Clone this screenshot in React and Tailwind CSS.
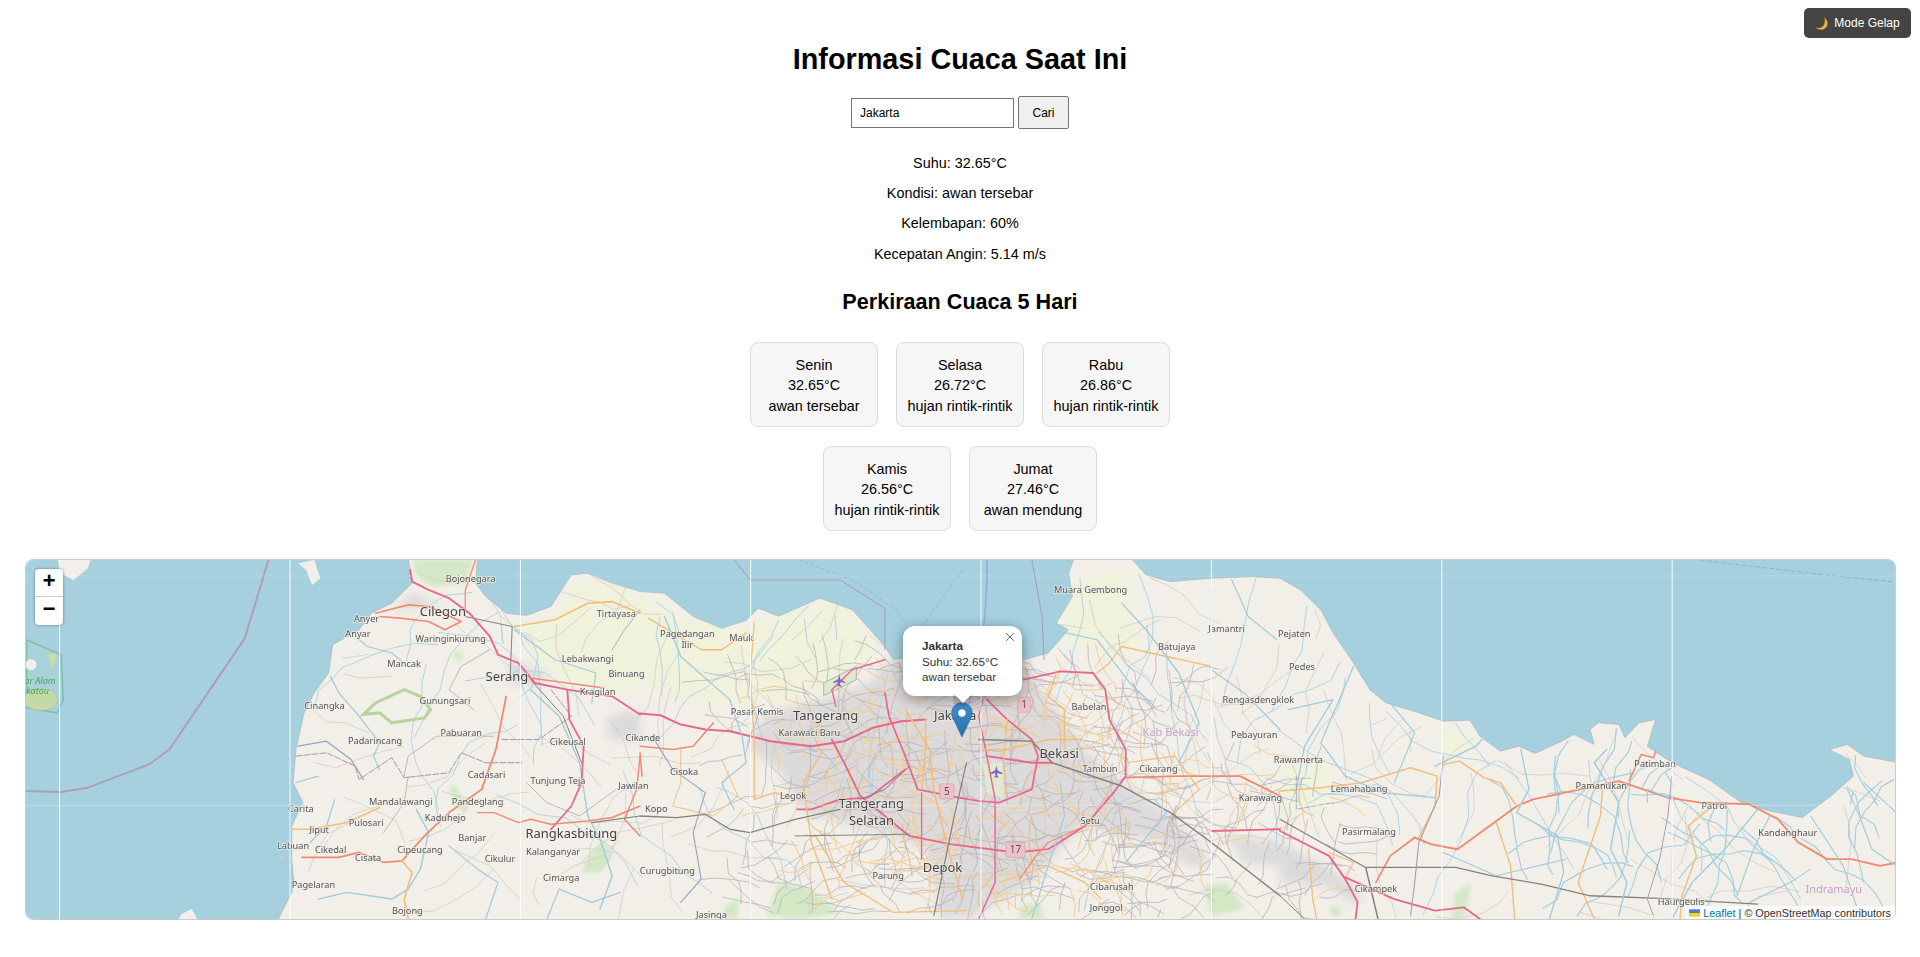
import React from "react";

const SX = 1 / 2.45;
const SY = 1 / 3;
const OFF = [0, 640, 1280];
const px = (p, x) => OFF[p] + x * SX;
const py = (y) => 550 + y * SY;
const toPath = (p, pts, close) =>
  pts.map(([x, y], i) => `${i ? "L" : "M"}${px(p, x).toFixed(1)} ${py(y).toFixed(1)}`).join(" ") + (close ? " Z" : "");

const landSegs = [
  [0, [[680,1115],[715,1030],[720,1000],[715,930],[715,830],[742,760],[718,700],[725,600],[745,490],[770,430],[805,370],[815,285],[880,240],[910,190],[960,160],[1010,100],[1000,20],[1170,20],[1165,100],[1190,140],[1240,190],[1290,197],[1350,170],[1400,75],[1440,70],[1500,100],[1568,125]]],
  [1, [[60,130],[130,200],[200,237],[260,212],[290,175],[340,200],[440,145],[520,180],[600,290],[620,330],[700,320],[800,300],[940,330],[1000,310],[1050,240],[1020,220],[1060,140],[1050,70],[1065,20],[1200,20],[1240,75],[1300,95],[1400,85],[1500,80],[1568,85]]],
  [2, [[50,120],[100,180],[130,250],[180,340],[220,420],[260,460],[340,490],[400,515],[465,512],[490,560],[540,605],[585,590],[625,612],[690,575],[720,555],[770,585],[760,540],[780,520],[830,525],[845,565],[880,520],[920,510],[900,590],[960,640],[1050,690],[1130,760],[1200,785],[1280,805],[1350,740],[1405,680],[1395,630],[1345,600],[1390,585],[1430,620],[1515,640],[1515,1115]]],
];
const landPts = landSegs.flatMap(([p, pts]) => pts.map(([x, y]) => [px(p, x), py(y)]));
const landMain = landPts.map(([x, y], i) => `${i ? "L" : "M"}${x.toFixed(1)} ${y.toFixed(1)}`).join(" ") + " Z";

const inLand = (x, y) => {
  let c = false;
  for (let i = 0, j = landPts.length - 1; i < landPts.length; j = i++) {
    const [xi, yi] = landPts[i];
    const [xj, yj] = landPts[j];
    if (yi > y !== yj > y && x < ((xj - xi) * (y - yi)) / (yj - yi) + xi) c = !c;
  }
  return c;
};

function rng(seed) {
  let a = seed;
  return () => {
    a |= 0;
    a = (a + 0x6d2b79f5) | 0;
    let t = Math.imul(a ^ (a >>> 15), 1 | a);
    t = (t + Math.imul(t ^ (t >>> 7), 61 | t)) ^ t;
    return ((t ^ (t >>> 14)) >>> 0) / 4294967296;
  };
}

function walks(seed, n, box, segs, step, dirFn) {
  const r = rng(seed);
  let d = "";
  for (let k = 0; k < n; k++) {
    let x = box[0] + r() * (box[2] - box[0]);
    let y = box[1] + r() * (box[3] - box[1]);
    if (!inLand(x, y)) continue;
    let ang = dirFn(r);
    d += `M${x.toFixed(1)} ${y.toFixed(1)}`;
    for (let s = 0; s < segs; s++) {
      ang += (r() - 0.5) * 1.1;
      const nx = x + Math.cos(ang) * step * (0.6 + r() * 0.8);
      const ny = y + Math.sin(ang) * step * (0.6 + r() * 0.8);
      if (!inLand(nx, ny)) break;
      x = nx;
      y = ny;
      d += `L${x.toFixed(1)} ${y.toFixed(1)}`;
    }
  }
  return d;
}
const anyDir = (r) => r() * Math.PI * 2;
const axis = (r) => (Math.floor(r() * 4) * Math.PI) / 2;
const north = (r) => -Math.PI / 2 + (r() - 0.5) * 0.8;

const texture = [
  [walks(11, 200, [300, 560, 1896, 920], 4, 22, anyDir), "#d3cec6", 0.8],
  [walks(12, 60, [300, 640, 1896, 920], 8, 20, north), "#b0d4e2", 1],
  [walks(13, 36, [1500, 780, 1896, 920], 7, 16, north), "#a6cfdf", 1.2],
  [walks(14, 320, [740, 660, 1180, 915], 4, 13, axis), "#b9b4b8", 0.8],
  [walks(15, 150, [780, 680, 1130, 900], 4, 13, axis), "#f4cc95", 1],
  [walks(16, 70, [1130, 780, 1340, 900], 4, 12, axis), "#b9b4b8", 0.8],
  [walks(17, 25, [1130, 760, 1340, 900], 3, 14, axis), "#f4cc95", 1],
];

const R = ({ p, pts, c, w = 1.5, dash }) => (
  <path d={toPath(p, pts)} fill="none" stroke={c} strokeWidth={w} strokeDasharray={dash} strokeLinejoin="round" strokeLinecap="round" />
);

const MOTOR = "#e8688a";
const TRUNK = "#f08b70";
const SEC = "#f4bd78";
const RIVER = "#9fcbdc";
const MINOR = "#bdb8b2";
const BORDER = "#a893ad";
const RAIL = "#85827e";
const SEAB = "#b09cb8";

const roads = [
  [0,[[658,28],[600,265],[520,410],[415,600],[365,645],[215,715],[150,728],[65,725]],SEAB,2],
  [1,[[230,28],[270,90],[490,90],[600,175],[600,300]],"#a99ab5",1],
  [1,[[960,28],[985,200],[990,330]],"#a99ab5",1],
  [2,[[1030,30],[1300,70],[1510,97]],"#8fb3cf",1,"4 3"],
  [1,[[850,30],[850,90],[845,200],[838,260]],"#8fb3e0",2,"3 2"],
  [1,[[390,30],[520,90],[630,180],[680,280]],"#8fb3cf",0.8,"3 3"],
  [1,[[790,60],[720,180],[680,260]],"#8fb3cf",0.8,"3 3"],
  [0,[[880,270],[900,290],[960,310],[1000,350]],RIVER,1.2],
  [0,[[810,380],[830,430],[880,500],[930,580],[915,620],[930,660]],RIVER,1.2],
  [0,[[730,590],[800,575],[860,630],[890,690]],"#8aa8c0",1.2],
  [0,[[725,700],[780,680]],RIVER,1.2],
  [0,[[820,750],[800,830],[760,880]],RIVER,1.2],
  [0,[[1020,780],[1050,850],[1030,960],[1000,1020],[960,1050],[850,1030],[780,1050]],RIVER,1.4],
  [0,[[1100,890],[1170,960],[1220,1000],[1190,1110]],RIVER,1.2],
  [0,[[1300,420],[1370,500],[1420,640],[1440,800],[1470,870],[1500,980],[1470,1080]],RIVER,1.4],
  [0,[[1340,1110],[1370,1020],[1450,1060],[1520,1030]],RIVER,1.2],
  [0,[[1500,300],[1530,240],[1568,180]],RIVER,1.2],
  [0,[[1260,240],[1360,330],[1460,370],[1450,460]],RIVER,1.2],
  [0,[[990,680],[1000,620],[1070,560],[1210,560]],MINOR,1],
  [0,[[1000,680],[990,760],[940,850]],MINOR,1],
  [0,[[1160,480],[1100,420],[1130,350],[1200,300]],MINOR,1],
  [0,[[1290,700],[1340,760],[1420,800],[1510,720]],MINOR,1],
  [0,[[725,620],[800,610],[870,650],[880,690],[960,625],[990,685],[1100,670],[1130,610],[1190,640],[1280,640]],BORDER,1,"6 2"],
  [0,[[1230,570],[1320,570],[1400,500],[1350,420]],BORDER,1,"6 2"],
  [0,[[1240,440],[1215,600],[1180,720],[1100,790],[1040,860],[985,935],[940,940],[880,910],[830,925],[740,925]],TRUNK,1.8],
  [0,[[920,190],[1000,165],[1050,170],[1130,215],[1090,240],[1050,215],[980,205],[930,200]],TRUNK,1.6],
  [0,[[715,840],[760,840],[850,820],[930,775]],SEC,1.6],
  [0,[[985,935],[1010,970],[990,1050],[1000,1110]],SEC,1.6],
  [0,[[1300,810],[1350,825],[1440,815],[1500,805],[1568,770]],TRUNK,1.6],
  [0,[[1568,620],[1560,720],[1530,810],[1568,860]],TRUNK,1.4],
  [0,[[1170,790],[1210,790],[1270,820],[1300,810]],TRUNK,1.4],
  [0,[[1260,230],[1360,210],[1440,160],[1500,155],[1568,190]],SEC,1.6],
  [0,[[1250,380],[1255,230],[1140,200]],RAIL,1],
  [0,[[1300,390],[1380,500],[1425,640]],RAIL,1],
  [0,[[1450,820],[1568,800]],RAIL,1.2],
  [0,[[1005,60],[1010,95],[1050,120],[1100,145],[1150,190],[1200,260],[1220,315],[1270,340],[1310,400],[1390,420],[1500,440],[1568,495]],MOTOR,1.9],
  [0,[[1165,30],[1140,120],[1140,200]],TRUNK,1.3],
  [0,[[1390,420],[1395,510],[1430,590],[1425,700],[1400,770],[1350,840]],MOTOR,1.8],
  [0,[[1300,385],[1390,400],[1480,415]],TRUNK,1.4],
  [1,[[0,492],[50,497],[100,525],[160,540],[220,545],[320,575],[420,590],[500,575],[570,535],[640,515],[700,510]],MOTOR,2],
  [1,[[600,430],[610,500],[650,620],[680,720],[780,745],[830,755],[880,760],[960,720],[975,620],[960,570],[900,510],[850,450]],MOTOR,1.7],
  [1,[[940,390],[1030,365],[1110,370],[1140,420],[1150,510],[1190,600],[1190,680],[1160,730],[1090,830],[1000,900],[920,910],[760,885],[660,860],[600,800],[540,740],[500,640],[470,570]],MOTOR,1.8],
  [1,[[385,780],[420,780],[490,750],[560,745],[650,660]],MOTOR,1.8],
  [1,[[850,620],[960,640],[1010,640]],MOTOR,1.9],
  [1,[[600,330],[520,360],[470,420],[480,470]],MOTOR,1.4],
  [1,[[840,450],[830,500],[850,620],[870,750],[870,1000],[830,1110]],MOTOR,1.4],
  [1,[[690,730],[690,930]],MOTOR,1.3],
  [1,[[1190,685],[1320,680],[1470,680],[1568,740]],TRUNK,1.8],
  [1,[[1400,845],[1568,840]],MOTOR,1.9],
  [1,[[180,520],[130,590],[80,600],[0,590]],TRUNK,1.5],
  [1,[[0,610],[5,680]],TRUNK,1.5],
  [1,[[1090,830],[1000,880],[970,920],[930,990]],TRUNK,1.3],
  [1,[[1040,600],[1040,480],[1000,440],[1020,370]],SEC,1.5],
  [1,[[650,480],[710,600],[720,720],[750,880],[790,1050]],SEC,1.5],
  [1,[[700,510],[700,600],[690,720]],SEC,1.5],
  [1,[[830,600],[900,600],[1000,570],[1080,570]],SEC,1.4],
  [1,[[900,510],[890,640],[900,740]],SEC,1.3],
  [1,[[450,600],[400,700],[420,880],[470,1050]],SEC,1.4],
  [1,[[280,220],[270,370],[280,580],[280,750],[330,730],[380,750]],SEC,1.3],
  [1,[[20,205],[150,300],[200,300],[260,250]],SEC,1.3],
  [1,[[430,860],[500,1000],[620,1090],[800,1085]],SEC,1.3],
  [1,[[1180,290],[1270,315],[1400,350]],SEC,1.4],
  [1,[[1180,290],[1150,340],[1120,370]],SEC,1.2],
  [1,[[880,1000],[1000,950],[1090,1000],[1130,1050]],SEC,1.2],
  [1,[[1190,640],[1310,620],[1370,720],[1300,800]],SEC,1.2],
  [1,[[100,600],[100,700],[80,770],[180,800],[240,740],[200,630]],SEC,1],
  [1,[[0,800],[90,805],[160,795],[220,840],[270,850],[380,810],[490,780]],RAIL,1.3],
  [1,[[380,860],[660,855]],RAIL,1],
  [1,[[660,650],[600,720],[540,750]],RAIL,1],
  [1,[[830,570],[960,575],[1010,640],[1180,710],[1300,790],[1400,880],[1568,1040]],RAIL,1.5],
  [1,[[800,640],[770,800],[720,1100]],RAIL,1.2],
  [1,[[60,200],[100,320],[220,450],[250,560],[260,640],[200,700],[230,780]],RIVER,1.3],
  [1,[[30,560],[80,660],[160,730],[130,850],[150,990],[100,1060]],"#9d9fc0",1.1],
  [1,[[1180,160],[1240,240],[1320,370],[1370,520],[1320,640]],RIVER,1.3],
  [1,[[1010,240],[1120,270],[1200,400],[1260,470]],RIVER,1.2],
  [1,[[1450,90],[1490,200],[1560,270]],RIVER,1.2],
  [1,[[1400,120],[1400,360],[1480,430],[1568,540]],RIVER,1.2],
  [1,[[1190,940],[1290,790],[1260,750]],RIVER,1.2],
  [1,[[960,1110],[1000,950],[1040,800],[1030,700]],RIVER,1.1],
  [2,[[330,865],[370,885],[435,900],[525,820],[580,770],[620,750],[830,695],[950,745],[1030,760],[1150,765],[1220,810],[1270,880],[1340,930],[1400,930],[1470,950],[1515,940]],TRUNK,1.9],
  [2,[[855,695],[885,615],[915,625],[920,605]],TRUNK,1.5],
  [2,[[330,865],[270,920],[235,1000]],TRUNK,1.7],
  [2,[[0,725],[100,715],[200,700],[320,655],[385,680],[380,770],[340,865]],SEC,1.5],
  [2,[[400,645],[440,635],[500,685],[540,700],[580,770]],SEC,1.5],
  [2,[[530,820],[565,950],[575,1110]],SEC,1.4],
  [2,[[790,720],[785,800],[730,1000],[770,1110]],SEC,1.4],
  [2,[[1050,780],[1000,830],[1020,920],[985,1040],[980,1110]],SEC,1.4],
  [2,[[70,900],[80,1050],[90,1110]],SEC,1.2],
  [2,[[160,985],[180,940],[120,910]],SEC,1.2],
  [2,[[0,845],[120,920],[160,990],[190,1060],[185,1110]],MOTOR,1.8],
  [2,[[160,985],[280,1050],[380,1085],[450,1075],[490,1110]],MOTOR,1.8],
  [2,[[0,810],[210,955],[430,955],[520,980],[640,1005],[760,1040],[930,1048],[1170,1065]],RAIL,1.3],
  [2,[[210,955],[240,1110]],RAIL,1.5],
  [2,[[0,1040],[60,1110]],RAIL,1],
  [2,[[20,480],[130,450],[60,590],[40,720]],RIVER,1.2],
  [2,[[180,350],[100,580],[160,680],[250,730],[380,745]],RIVER,1.2],
  [2,[[270,460],[330,550],[280,700]],RIVER,1.1],
  [2,[[380,650],[480,590],[495,570]],RIVER,1.4],
  [2,[[590,600],[610,720],[580,790],[680,860],[695,970],[660,1110]],RIVER,1.3],
  [2,[[800,600],[770,640],[830,760],[810,900],[850,1000],[830,1100]],RIVER,1.4],
  [2,[[900,760],[900,720],[960,750]],RIVER,1.1],
  [2,[[400,910],[530,980],[700,930]],RIVER,1.1],
  [2,[[1170,780],[1090,900],[1010,1000],[960,1110]],RIVER,1.3],
  [2,[[1200,800],[1160,900],[1120,1040]],RIVER,1.1],
  [2,[[1300,800],[1380,950],[1420,1100]],RIVER,1.1],
  [2,[[1390,720],[1420,800],[1450,900],[1510,950]],RIVER,1.1],
  [2,[[1430,700],[1510,790]],RIVER,1.1],
  [2,[[1300,960],[1250,1000],[1150,1060]],RIVER,1.1],
  [2,[[400,620],[390,740],[340,880],[330,1000],[320,1100]],"#a89bbd",1.1],
  [2,[[960,680],[950,800],[930,930],[900,1050],[915,1100]],"#a89bbd",1],
  [2,[[40,680],[40,780],[130,760]],"#a89bbd",0.9,"5 2"],
];

const labels = [
  [0,"Bojonegara",1153,87],[0,"Cilegon",1085,183,13],[0,"Tirtayasa",1510,192],[0,"Anyer",898,207],[0,"Anyar",877,252],
  [0,"Waringinkurung",1104,267],[0,"Mancak",990,340],[0,"Lebakwangi",1440,327],[0,"Binuang",1535,371],[0,"Serang",1242,380,13],
  [0,"Kragilan",1464,425],[0,"Gunungsari",1090,453],[0,"Cinangka",795,468],[0,"Pabuaran",1130,550],[0,"Padarincang",919,573],
  [0,"Cikeusal",1391,577],[0,"Cikande",1575,563],[0,"Cadasari",1192,676],[0,"Tunjung Teja",1367,692],[0,"Jawilan",1552,709],
  [0,"Mandalawangi",982,758],[0,"Pandeglang",1170,758],[0,"Carita",737,779],[0,"Kaduhejo",1091,806],[0,"Pulosari",897,819],
  [0,"Jiput",782,841],[0,"Rangkasbitung",1400,850,13],[0,"Banjar",1157,866],[0,"Labuan",718,890],[0,"Cikedal",810,902],
  [0,"Cipeucang",1029,901],[0,"Cisata",902,925],[0,"Cikulur",1225,927],[0,"Kalanganyar",1355,908],[0,"Cimarga",1375,985],
  [0,"Pagelaran",768,1005],[0,"Bojong",998,1084],
  [1,"Muara Gembong",1104,119],[1,"Pagedangan",116,250],[1,"Ilir",116,284],[1,"Mauk",248,263],[1,"Jamantri",1437,236],
  [1,"Batujaya",1315,291],[1,"Rengasdengklok",1515,451],[1,"Pasar Kemis",287,486],[1,"Tangerang",455,497,13],[1,"Jakarta",772,497,13],
  [1,"Babelan",1100,471],[1,"Karawaci Baru",415,548],[1,"Kab Bekasi",1300,548,11,"#c3a3c6"],[1,"Pebayuran",1505,556],[1,"Bekasi",1027,611,13],
  [1,"Tambun",1127,658],[1,"Cikarang",1270,658],[1,"Cisoka",108,666],[1,"Legok",375,740],[1,"Karawang",1520,744],
  [1,"Tangerang",567,762,13],[1,"Selatan",567,811,13],[1,"Kopo",40,777],[1,"Setu",1103,813],[1,"Curugbitung",67,965],
  [1,"Depok",741,953,13],[1,"Parung",608,980],[1,"Cibarusah",1156,1012],[1,"Jonggol",1142,1076],[1,"Jasinga",175,1098],
  [2,"Pejaten",35,251],[2,"Pedes",54,351],[2,"Rawamerta",45,631],[2,"Lemahabang",194,716],[2,"Pasirmalang",218,846],
  [2,"Cikampek",235,1017],[2,"Patimban",919,641],[2,"Pamanukan",787,707],[2,"Patrol",1064,768],[2,"Kandanghaur",1244,849],
  [2,"Haurgeulis",983,1057],[2,"Indramayu",1357,1022,11,"#c3a3c6"],
];

const urban = [
  [1,[[610,330],[940,330],[1000,450],[1090,600],[1180,700],[1300,800],[1380,900],[1250,870],[1080,830],[960,1000],[820,1100],[740,1110],[700,900],[620,860],[520,830],[400,790],[340,660],[260,590],[310,490],[450,450],[560,400]]],
  [1,[[1290,890],[1370,900],[1400,950],[1340,950]]],
  [1,[[1440,860],[1568,880],[1568,950],[1480,940]]],
  [0,[[1010,130],[1090,170],[1050,170],[960,180]]],
  [0,[[1250,330],[1340,370],[1320,410],[1250,400]]],
  [0,[[1490,500],[1568,480],[1568,570],[1490,570]]],
  [2,[[0,880],[110,950],[200,1030],[190,1070],[110,1010],[0,1000]]],
];

const paleFields = [
  [0,[[1270,230],[1360,190],[1410,90],[1500,110],[1568,140],[1568,420],[1450,430],[1320,350]]],
  [1,[[0,140],[130,210],[260,225],[450,160],[520,200],[590,310],[430,430],[250,470],[100,450],[0,400]]],
  [1,[[1070,80],[1200,60],[1230,300],[1130,320],[1040,260]]],
  [2,[[0,640],[130,650],[120,800],[0,800]]],
  [2,[[400,530],[480,570],[420,640],[400,620]]],
];

const greens = [
  [0,[[1110,700],[1120,720],[1150,780],[1130,790],[1100,730]]],
  [0,[[1110,300],[1135,310],[1130,340],[1115,330]]],
  [0,[[1440,920],[1480,870],[1500,920],[1470,970],[1425,970]]],
  [0,[[1010,30],[1160,30],[1140,100],[1060,110],[1020,80]]],
  [1,[[340,1000],[420,1020],[490,1090],[400,1110],[310,1100]]],
  [1,[[1380,1010],[1440,1000],[1480,1080],[1400,1100]]],
  [1,[[210,1070],[240,1050],[240,1110],[200,1110]]],
  [1,[[930,1070],[980,1060],[990,1110],[930,1110]]],
  [2,[[430,1030],[470,1000],[450,1110],[420,1110]]],
  [2,[[120,1075],[150,1070],[150,1100],[125,1100]]],
];

const plane = (x, y) => (
  <path transform={`translate(${x} ${y}) scale(0.55)`} d="M0-11 L2-2 L11 3 L11 5 L2 3 L1.5 8 L4 10 L4 11.5 L0 10.5 L-4 11.5 L-4 10 L-1.5 8 L-2 3 L-11 5 L-11 3 L-2-2 Z" fill="#8461c4" />
);

const shield = (p, zx, zy, t, w) => (
  <g key={t}>
    <rect x={px(p, zx) - w / 2} y={py(zy) - 7.5} width={w} height={15} rx={1.5} fill="#efc0c9" stroke="#d9a0ac" strokeWidth="0.7" />
    <text x={px(p, zx)} y={py(zy) + 3.5} textAnchor="middle" fontSize="10" fill="#555" fontFamily="'Noto Sans',sans-serif">{t}</text>
  </g>
);

function MapArt() {
  const seams = [59.6, 290, 520.4, 750.6, 981, 1211.4, 1441.8, 1672.2];
  return (
    <svg viewBox="26 560 1869 360" preserveAspectRatio="none" className="absolute inset-0 h-full w-full blur-[0.45px]">
      <defs>
        <filter id="soft" x="-10%" y="-10%" width="120%" height="120%">
          <feGaussianBlur stdDeviation="5" />
        </filter>
        <filter id="soft2" x="-10%" y="-10%" width="120%" height="120%">
          <feGaussianBlur stdDeviation="2" />
        </filter>
        <clipPath id="landClip">
          <path d={landMain} />
        </clipPath>
        <linearGradient id="pin" x1="0" x2="0" y1="0" y2="1">
          <stop offset="0" stopColor="#3f8fd2" />
          <stop offset="1" stopColor="#2a6fa8" />
        </linearGradient>
      </defs>
      <rect x="0" y="500" width="1920" height="460" fill="#a6d0de" />
      <path d={landMain} fill="#f2efe9" stroke="#a3a6a8" strokeWidth="0.5" />
      <g clipPath="url(#landClip)">
        <g filter="url(#soft)">
          {paleFields.map(([p, pts], i) => (
            <path key={i} d={toPath(p, pts, true)} fill="#f0f2dc" />
          ))}
        </g>
        <g filter="url(#soft)">
          {urban.map(([p, pts], i) => (
            <path key={i} d={toPath(p, pts, true)} fill="#dcdada" />
          ))}
        </g>
        <g filter="url(#soft2)">
          {greens.map(([p, pts], i) => (
            <path key={i} d={toPath(p, pts, true)} fill="#d3e8c4" />
          ))}
        </g>
        {texture.map(([d, c, w], i) => (
          <path key={i} d={d} fill="none" stroke={c} strokeWidth={w} strokeLinejoin="round" />
        ))}
      </g>
      <path d={toPath(0, [[140,20],[225,20],[215,55],[180,90],[150,70]], true)} fill="#f2efe9" />
      <path d={toPath(0, [[730,40],[770,30],[785,85],[765,105],[750,60]], true)} fill="#f2efe9" />
      <path d={toPath(0, [[435,1115],[445,1095],[470,1080],[485,1115]], true)} fill="#f2efe9" />
      <path d={toPath(0, [[65,270],[150,315],[155,450],[140,490],[65,475]], true)} fill="#b2d8c8" fillOpacity="0.18" stroke="#7fc0a6" strokeWidth="1.6" />
      <ellipse cx={px(0, 100)} cy={py(450)} rx="17" ry="11" fill="#c4d9a5" stroke="#b4b4a0" strokeWidth="0.5" />
      <circle cx={px(0, 76)} cy={py(345)} r="5.5" fill="#f2efe9" />
      <path d={toPath(0, [[118,310],[140,315],[128,360]], true)} fill="#c9dd9f" />
      <circle cx={px(0, 690)} cy={py(928)} r="2" fill="#c9c9d8" />
      <path d={toPath(0, [[890,495],[920,460],[990,420],[1030,440],[1055,480],[1040,505],[960,520],[930,490]], true)} fill="none" stroke="#b7d3a0" strokeWidth="3" />
      <path d={toPath(1, [[450,400],[530,350],[530,390],[450,438]], true)} fill="#dfe9cf" stroke="#8b8b8b" strokeWidth="0.6" />
      <path d={toPath(1, [[840,640],[890,640],[890,750],[850,730]], true)} fill="#dfe9cf" />
      {roads.map(([p, pts, c, w, dash], i) => (
        <R key={i} p={p} pts={pts} c={c} w={w} dash={dash} />
      ))}
      {plane(px(1, 488), py(392))}
      {plane(px(1, 873), py(666))}
      {shield(1, 941, 465, "1", 13)}
      {shield(1, 752, 726, "5", 14)}
      {shield(1, 920, 902, "17", 19)}
      <g fontFamily="'Noto Sans',sans-serif">
        {labels.map(([p, t, x, y, s = 9.2, c = "#555"], i) => (
          <text key={i} x={px(p, x)} y={py(y) + (s > 12 ? 5 : 3.5)} textAnchor="middle" fontSize={s} fill={s > 12 ? "#444" : c} stroke="#f2efe9" strokeWidth="1.6" strokeOpacity="0.75" paintOrder="stroke">
            {t}
          </text>
        ))}
        <text x={px(0, 98)} y={py(393) + 3} textAnchor="middle" fontSize="9" fontStyle="italic" fill="#3faa5c">ar Alam</text>
        <text x={px(0, 92)} y={py(425) + 3} textAnchor="middle" fontSize="9" fontStyle="italic" fill="#3faa5c">katou</text>
      </g>
      {seams.map((x) => (
        <line key={x} x1={x} x2={x} y1="560" y2="920" stroke="#ffffff" strokeOpacity="0.9" strokeWidth="1" />
      ))}
      <line x1="26" x2="1896" y1="806" y2="806" stroke="#ffffff" strokeOpacity="0.3" strokeWidth="1" />
      <line x1="26" x2="1896" y1="576" y2="576" stroke="#ffffff" strokeOpacity="0.2" strokeWidth="1" />
      <g transform="translate(951.2 702.7) scale(0.86)">
        <path d="M12.5 0.5 C5.8 0.5 0.5 5.8 0.5 12.5 C0.5 15 1.2 17 2.3 19 L12.5 40.5 L22.7 19 C23.8 17 24.5 15 24.5 12.5 C24.5 5.8 19.2 0.5 12.5 0.5 Z" fill="url(#pin)" stroke="#2e6c97" strokeWidth="0.7" />
        <circle cx="12.5" cy="12.5" r="4.3" fill="#fff" />
      </g>
    </svg>
  );
}

const forecast = [
  ["Senin", "32.65°C", "awan tersebar"],
  ["Selasa", "26.72°C", "hujan rintik-rintik"],
  ["Rabu", "26.86°C", "hujan rintik-rintik"],
  ["Kamis", "26.56°C", "hujan rintik-rintik"],
  ["Jumat", "27.46°C", "awan mendung"],
];

export default function App() {
  return (
    <div className="relative min-h-[957px] bg-white pt-[43px] text-center font-['Liberation_Sans',Arial,sans-serif] text-[14.4px] text-black">
      <button className="absolute right-[9px] top-[8px] flex h-[30px] w-[107px] items-center justify-center gap-[4px] rounded-[5px] bg-[#444444] text-[12px] text-white">
        <svg viewBox="0 0 16 16" className="h-[15px] w-[15px]">
          <path d="M10 1.5 C13.8 4.8 14.4 9.5 11.4 12.6 C8.8 15.2 4.2 15.4 1 12.6 C4.5 13.4 7.6 12.4 9.3 9.8 C10.8 7.4 10.9 4.3 10 1.5 Z" fill="#f0b93a" stroke="#a97a20" strokeWidth="0.5" />
        </svg>
        <span>Mode Gelap</span>
      </button>

      <h1 className="text-[28.8px] font-bold leading-[33px]">Informasi Cuaca Saat Ini</h1>

      <div className="mt-[20px] flex items-center justify-center gap-[4px]">
        <input
          readOnly
          value="Jakarta"
          className="h-[30px] w-[163px] border border-[#767676] bg-white px-[8px] text-[12px] text-black outline-none"
        />
        <button className="h-[33px] w-[51px] rounded-[2px] border border-[#767676] bg-[#efefef] text-[12px] text-black">Cari</button>
      </div>

      <div className="mt-[25.5px] flex flex-col gap-[14.4px] leading-[16px]">
        <p>Suhu: 32.65°C</p>
        <p>Kondisi: awan tersebar</p>
        <p>Kelembapan: 60%</p>
        <p>Kecepatan Angin: 5.14 m/s</p>
      </div>

      <h2 className="mt-[27px] text-[21.6px] font-bold leading-[25px]">Perkiraan Cuaca 5 Hari</h2>

      <div className="mx-auto mt-[28px] flex w-[440px] flex-wrap justify-center gap-[18.6px]">
        {forecast.map(([d, t, c]) => (
          <div key={d} className="h-[85.6px] w-[127.4px] rounded-[8px] border border-[#dddddd] bg-[#f6f6f6] pt-[12px] leading-[20.6px]">
            <div>{d}</div>
            <div>{t}</div>
            <div>{c}</div>
          </div>
        ))}
      </div>

      <div className="relative ml-[25px] mr-[24px] mt-[28px] h-[361px] overflow-hidden rounded-[8px] border border-[#cccccc]">
        <MapArt />

        <div className="absolute left-[9px] top-[9px] w-[28px] overflow-hidden rounded-[4px] bg-white shadow-[0_0_3px_rgba(0,0,0,0.45)]">
          <div className="flex h-[28px] items-center justify-center border-b border-[#cccccc] font-['Liberation_Mono',monospace] text-[22px] font-bold leading-none">+</div>
          <div className="flex h-[28px] items-center justify-center font-['Liberation_Mono',monospace] text-[22px] font-bold leading-none">−</div>
        </div>

        <div className="absolute left-[877px] top-[66px] h-[70px] w-[119px] rounded-[12px] bg-white pl-[19px] pt-[12px] text-left text-[11.7px] leading-[15.4px] text-[#333333] shadow-[0_3px_14px_rgba(0,0,0,0.4)]">
          <div className="font-bold">Jakarta</div>
          <div>Suhu: 32.65°C</div>
          <div>awan tersebar</div>
          <svg viewBox="0 0 10 10" className="absolute right-[7px] top-[6px] h-[10px] w-[10px]">
            <path d="M1.2 1.2 L8.8 8.8 M8.8 1.2 L1.2 8.8" stroke="#666" strokeWidth="1" />
          </svg>
          <div className="absolute left-[50px] top-[68px] h-[12px] w-[20px] overflow-hidden">
            <div className="mx-auto -mt-[8px] h-[14px] w-[14px] rotate-45 bg-white shadow-[0_3px_14px_rgba(0,0,0,0.4)]" />
          </div>
        </div>

        <div className="absolute bottom-0 right-0 flex h-[13px] items-center bg-white/80 pl-[4px] pr-[4px] text-[10.8px] leading-none text-[#333333]">
          <svg viewBox="0 0 12 8" className="mr-[3px] h-[8px] w-[11px]">
            <rect width="12" height="4" fill="#4C7BE1" />
            <rect y="4" width="12" height="4" fill="#FFD500" />
          </svg>
          <span className="text-[#0078a8]">Leaflet</span>
          <span className="whitespace-pre"> | © OpenStreetMap contributors</span>
        </div>
      </div>
    </div>
  );
}
